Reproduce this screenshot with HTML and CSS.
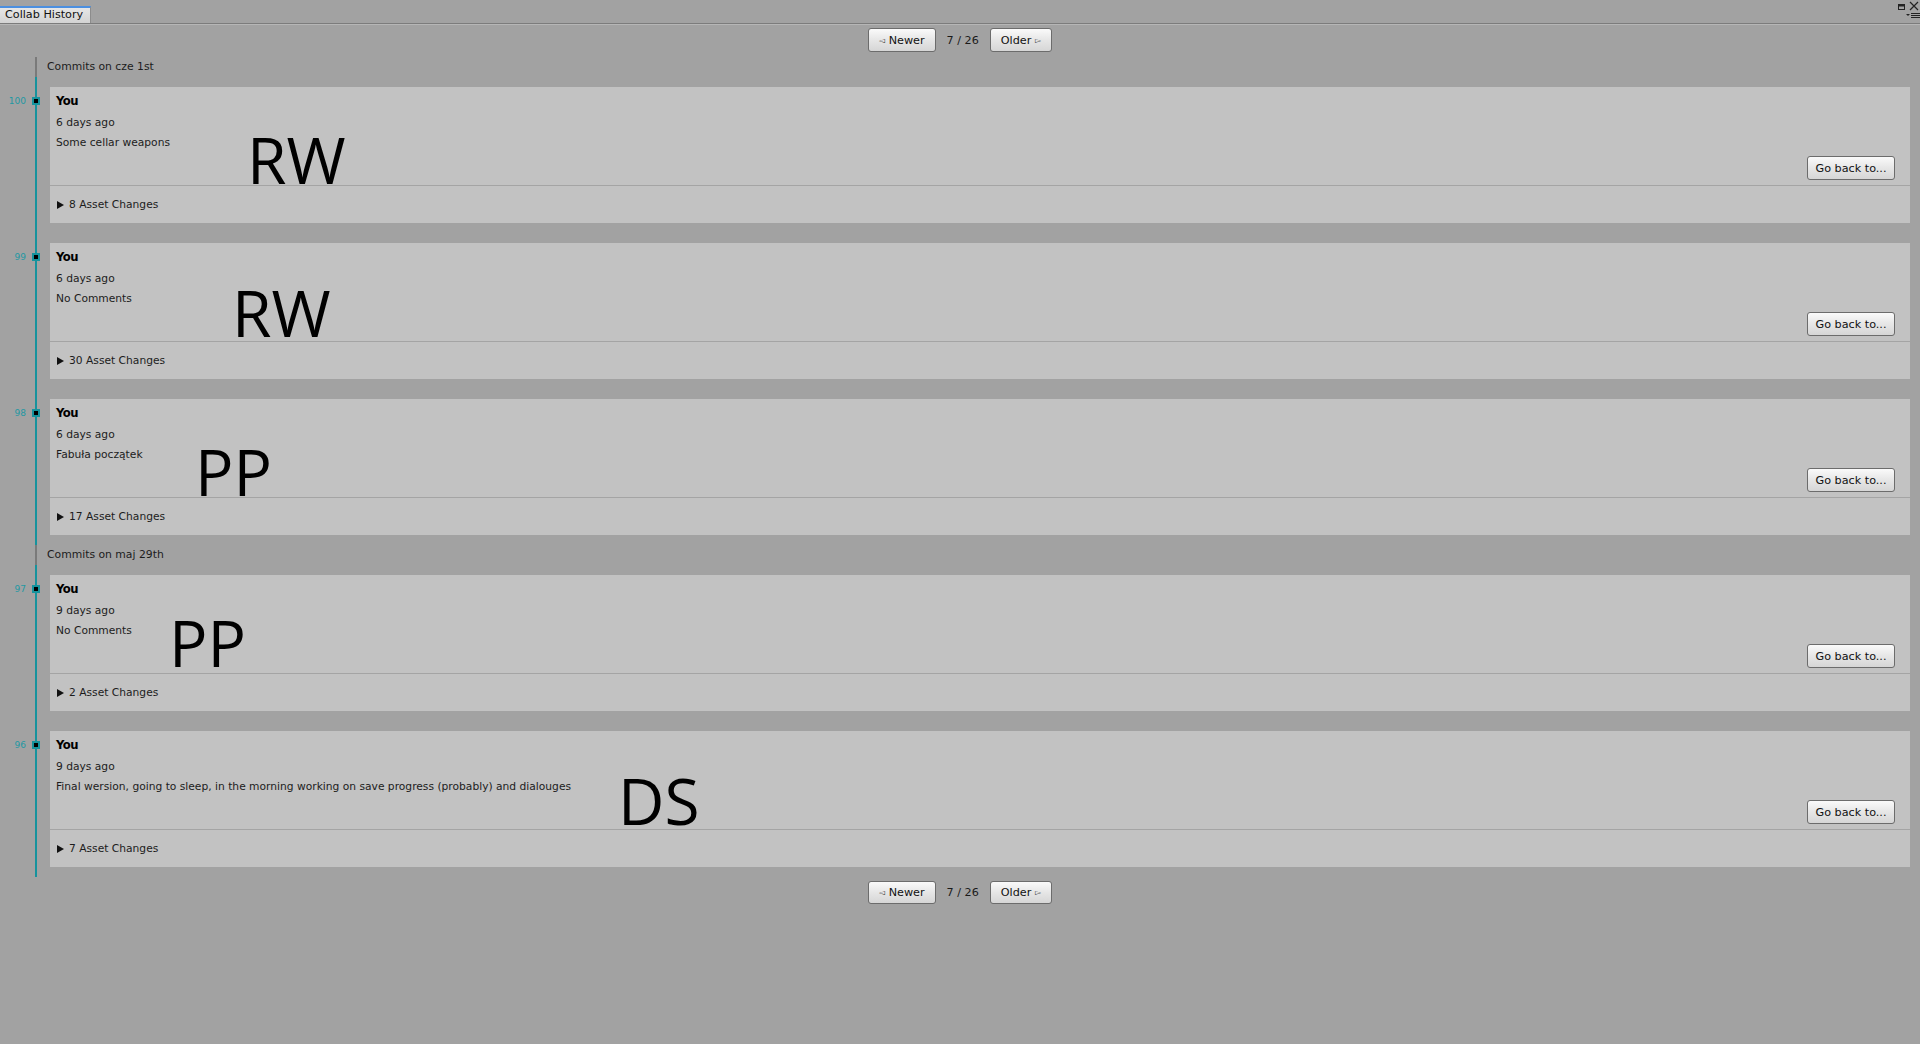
FILE: index.html
```html
<html>
<head>
  <meta charset="UTF-8">
  <title>Collab History</title>

  <link rel="stylesheet" href="styles.css">
</head>
<body>
  <div class="tabbar">
    <div class="tab">Collab History</div>
    <svg class="window-tools" width="30" height="20" viewBox="0 0 30 20">
      <rect x="8.5" y="4.5" width="6" height="5" fill="none" stroke="#222" stroke-width="1"/>
      <rect x="8.5" y="4.5" width="6" height="2" fill="#222"/>
      <path d="M20 2 L28 10 M28 2 L20 10" stroke="#222" stroke-width="1.2"/>
      <path d="M16 14 L20 14 L18 16 Z" fill="#222"/>
      <path d="M21 13.5 H30 M21 15.5 H30 M21 17.5 H30" stroke="#222" stroke-width="1"/>
    </svg>
  </div>

  <div class="pager">
    <button class="btn"><span class="pointer">&#9669;</span> Newer</button>
    <span class="page-count">7 / 26</span>
    <button class="btn">Older <span class="pointer">&#9659;</span></button>
  </div>

  <div class="timeline">
    <div class="group-head"><span class="group-title">Commits on cze 1st</span></div>
    <div class="group-commits">

      <div class="commit">
        <div class="gutter"><span class="rev">100</span><span class="node"></span></div>
        <div class="card">
          <div class="card-top">
            <div class="card-info">
              <div class="author">You</div>
              <div class="line">6 days ago</div>
              <div class="line">Some cellar weapons</div>
            </div>
            <button class="btn btn-back">Go back to...</button>
            <span class="tag" style="left: 197px; top: 49px">RW</span>
          </div>
          <div class="card-bottom"><span class="arrow"></span>8 Asset Changes</div>
        </div>
      </div>

      <div class="commit">
        <div class="gutter"><span class="rev">99</span><span class="node"></span></div>
        <div class="card">
          <div class="card-top">
            <div class="card-info">
              <div class="author">You</div>
              <div class="line">6 days ago</div>
              <div class="line">No Comments</div>
            </div>
            <button class="btn btn-back">Go back to...</button>
            <span class="tag" style="left: 182px; top: 46px">RW</span>
          </div>
          <div class="card-bottom"><span class="arrow"></span>30 Asset Changes</div>
        </div>
      </div>

      <div class="commit">
        <div class="gutter"><span class="rev">98</span><span class="node"></span></div>
        <div class="card">
          <div class="card-top">
            <div class="card-info">
              <div class="author">You</div>
              <div class="line">6 days ago</div>
              <div class="line">Fabuła początek</div>
            </div>
            <button class="btn btn-back">Go back to...</button>
            <span class="tag" style="left: 145px; top: 49px">PP</span>
          </div>
          <div class="card-bottom"><span class="arrow"></span>17 Asset Changes</div>
        </div>
      </div>

    </div>

    <div class="group-head"><span class="group-title">Commits on maj 29th</span></div>
    <div class="group-commits">

      <div class="commit">
        <div class="gutter"><span class="rev">97</span><span class="node"></span></div>
        <div class="card">
          <div class="card-top">
            <div class="card-info">
              <div class="author">You</div>
              <div class="line">9 days ago</div>
              <div class="line">No Comments</div>
            </div>
            <button class="btn btn-back">Go back to...</button>
            <span class="tag" style="left: 119px; top: 44px">PP</span>
          </div>
          <div class="card-bottom"><span class="arrow"></span>2 Asset Changes</div>
        </div>
      </div>

      <div class="commit">
        <div class="gutter"><span class="rev">96</span><span class="node"></span></div>
        <div class="card">
          <div class="card-top">
            <div class="card-info">
              <div class="author">You</div>
              <div class="line">9 days ago</div>
              <div class="line">Final wersion, going to sleep, in the morning working on save progress (probably) and dialouges</div>
            </div>
            <button class="btn btn-back">Go back to...</button>
            <span class="tag" style="left: 568px; top: 46px">DS</span>
          </div>
          <div class="card-bottom"><span class="arrow"></span>7 Asset Changes</div>
        </div>
      </div>

    </div>
  </div>

  <div class="pager pager-bottom">
    <button class="btn"><span class="pointer">&#9669;</span> Newer</button>
    <span class="page-count">7 / 26</span>
    <button class="btn">Older <span class="pointer">&#9659;</span></button>
  </div>
</body>
</html>
```

FILE: styles.css
```css
* {
  margin: 0;
  padding: 0;
  box-sizing: border-box;
}

body {
  background: #a2a2a2;
  font-family: "DejaVu Sans", "Noto Sans", sans-serif;
  font-size: 10.7px;
  color: #1c1c1c;
  height: 100vh;
  overflow: hidden;
}

/* tab strip */

.tabbar {
  height: 24px;
  display: flex;
  align-items: flex-end;
  border-bottom: 1px solid #7c7c7c;
  box-shadow: 0 1px 0 #b6b6b6;
}

.tab {
  width: 91px;
  height: 17px;
  padding-left: 5px;
  border-top: 2px solid #4b8fe0;
  border-right: 1px solid #8c8c8c;
  background: linear-gradient(#e6e6e6, #d3d3d3);
  font-size: 11.2px;
  line-height: 14px;
  color: #111;
}

.window-tools {
  margin-left: auto;
  align-self: flex-start;
}

/* pager */

.pager {
  display: flex;
  justify-content: center;
  align-items: center;
  gap: 11px;
  padding: 4px 0 5px;
}

.pager-bottom {
  padding-top: 4px;
}

.pager-bottom .btn {
  height: 23px;
}

.btn {
  font-family: inherit;
  font-size: 11.2px;
  color: #111;
  height: 24px;
  padding: 0 10px;
  border: 1px solid #6c6c6c;
  border-radius: 3px;
  background: linear-gradient(#fafafa, #e6e6e6 50%, #d6d6d6);
}

.pointer {
  font-size: 8px;
  color: #333;
  vertical-align: 1px;
}

.page-count {
  font-size: 11.2px;
  color: #1a1a1a;
}

/* timeline */

.group-head {
  height: 20px;
  padding-left: 47px;
  line-height: 20px;
  font-size: 10.8px;
  background: linear-gradient(#7a7a7a, #7a7a7a) no-repeat 35px 0 / 2px 100%;
}

.group-commits {
  padding: 10px 10px 10px 0;
  display: flex;
  flex-direction: column;
  gap: 20px;
  background: linear-gradient(#16939d, #16939d) no-repeat 35px 0 / 2px 100%;
}

.commit {
  display: flex;
}

.gutter {
  width: 50px;
  flex: none;
  display: flex;
  align-items: center;
  height: 28px;
}

.rev {
  width: 26px;
  text-align: right;
  font-size: 9px;
  color: #1f98a2;
}

.node {
  width: 8px;
  height: 8px;
  margin-left: 6px;
  background: #000;
  border: 2px solid #16939d;
}

.card {
  flex: 1;
  background: #c2c2c2;
}

.card-top {
  position: relative;
  height: 99px;
  display: flex;
  justify-content: space-between;
  align-items: flex-end;
  padding: 5px 15px 5px 6px;
  border-bottom: 1px solid #a4a4a4;
}

.card-info {
  align-self: flex-start;
}

.author {
  font-weight: bold;
  font-size: 11.6px;
  letter-spacing: -0.5px;
  line-height: 18px;
  color: #000;
  margin-bottom: 3px;
}

.line {
  line-height: 20px;
}

.btn-back {
  width: 88px;
  padding: 0;
}

.tag {
  position: absolute;
  font-family: "Open Sans", sans-serif;
  font-size: 64px;
  line-height: 48px;
  color: #000;
}

.card-bottom {
  height: 37px;
  display: flex;
  align-items: center;
  padding-left: 7px;
}

.arrow {
  width: 0;
  height: 0;
  margin-right: 5px;
  border-left: 7px solid #111;
  border-top: 4px solid transparent;
  border-bottom: 4px solid transparent;
}
```
